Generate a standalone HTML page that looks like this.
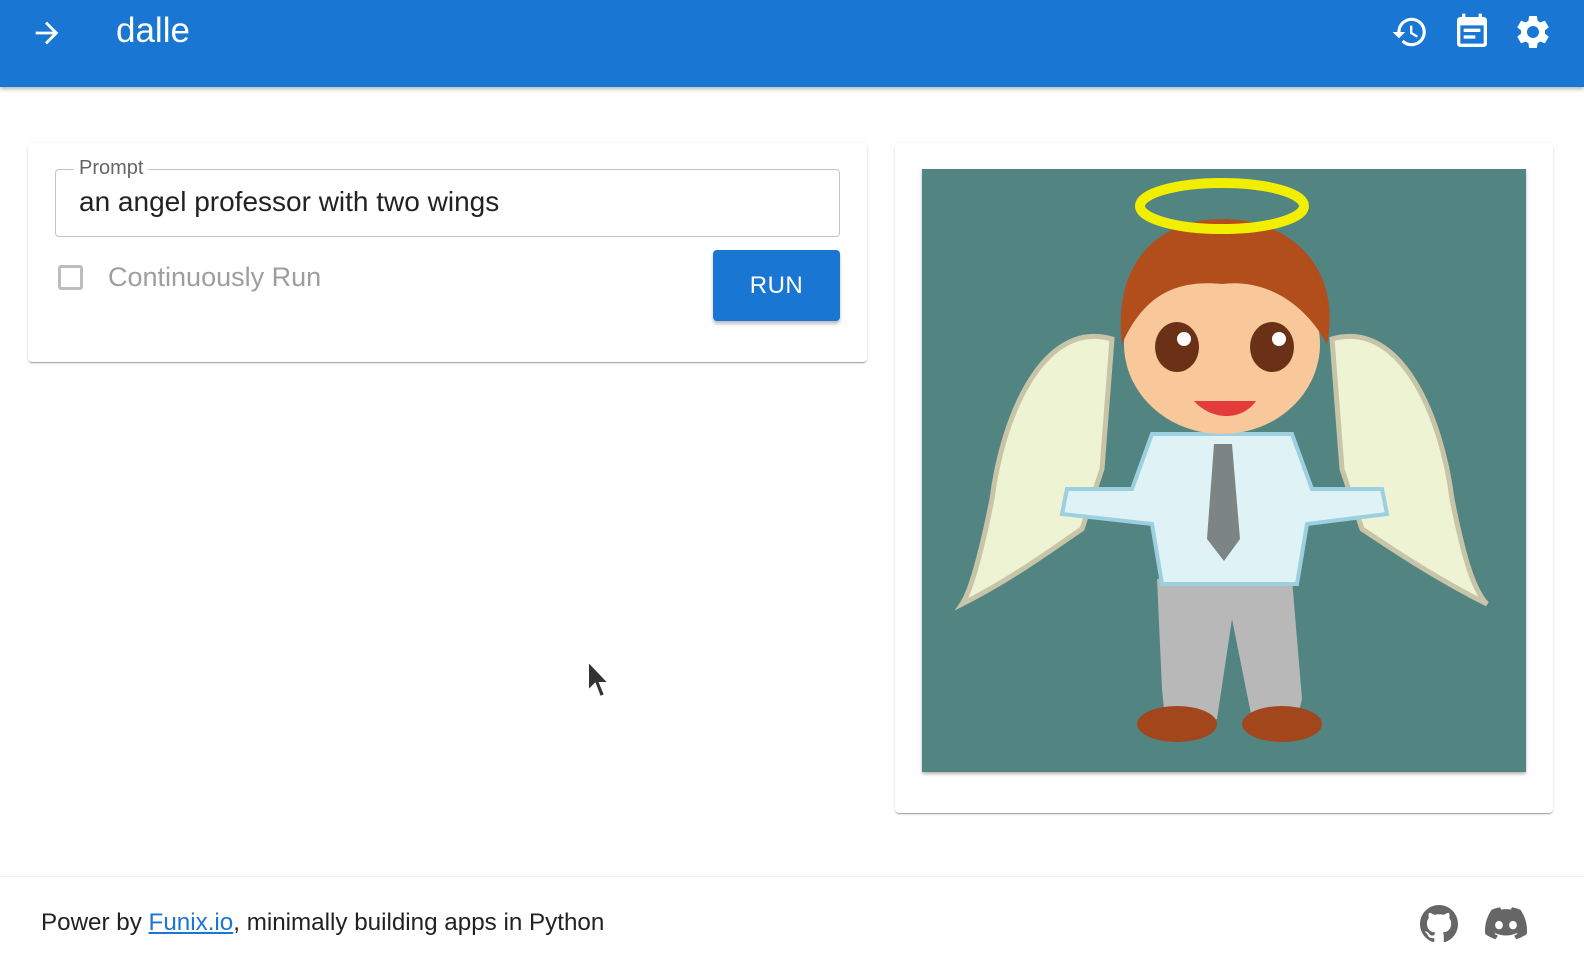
<!DOCTYPE html>
<html><head><meta charset="utf-8"><style>
body{margin:0;width:1584px;height:972px;background:#fff;font-family:"Liberation Sans",sans-serif;position:relative;overflow:hidden}
.hdr{position:absolute;left:0;top:0;width:1584px;height:87px;background:#1976d2;box-shadow:0 2px 4px rgba(0,0,0,.3)}
.card{position:absolute;background:#fff;border-radius:4px;box-shadow:0 2px 1px -1px rgba(0,0,0,.2),0 1px 1px rgba(0,0,0,.14),0 1px 3px rgba(0,0,0,.12)}
</style></head><body>
<div class="hdr">
<svg style="position:absolute;left:30px;top:16px" width="34" height="34" viewBox="0 0 24 24" fill="#fff"><path d="M12 4l-1.41 1.41L16.17 11H4v2h12.17l-5.58 5.59L12 20l8-8z"/></svg>
<div style="position:absolute;left:116px;top:11px;color:#fff;font-size:35px;font-weight:500">dalle</div>
<svg style="position:absolute;left:1391px;top:13px" width="38" height="38" viewBox="0 0 24 24" fill="#fff"><path d="M13 3a9 9 0 0 0-9 9H1l3.89 3.89.07.14L9 12H6c0-3.87 3.13-7 7-7s7 3.13 7 7-3.13 7-7 7c-1.93 0-3.68-.79-4.94-2.06l-1.42 1.42A8.954 8.954 0 0 0 13 21a9 9 0 0 0 0-18zm-1 5v5l4.28 2.54.72-1.21-3.5-2.08V8H12z"/></svg>
<svg style="position:absolute;left:1452px;top:12px" width="40" height="40" viewBox="0 0 24 24" fill="#fff"><path d="M17 10H7v2h10v-2zm2-7h-1V1h-2v2H8V1H6v2H5c-1.11 0-1.99.9-1.99 2L3 19a2 2 0 0 0 2 2h14c1.1 0 2-.9 2-2V5c0-1.1-.9-2-2-2zm0 16H5V8h14v11zm-5-5H7v2h7v-2z"/></svg>
<svg style="position:absolute;left:1513px;top:12px" width="40" height="40" viewBox="0 0 24 24" fill="#fff"><path d="M19.14 12.94c.04-.3.06-.61.06-.94 0-.32-.02-.64-.07-.94l2.03-1.58a.49.49 0 0 0 .12-.61l-1.92-3.32a.488.488 0 0 0-.59-.22l-2.39.96c-.5-.38-1.03-.7-1.62-.94l-.36-2.54a.484.484 0 0 0-.48-.41h-3.84c-.24 0-.43.17-.47.41l-.36 2.54c-.59.24-1.13.57-1.62.94l-2.39-.96c-.22-.08-.47 0-.59.22L2.74 8.87c-.12.21-.08.47.12.61l2.03 1.58c-.05.3-.09.63-.09.94s.02.64.07.94l-2.03 1.58a.49.49 0 0 0-.12.61l1.92 3.32c.12.22.37.29.59.22l2.39-.96c.5.38 1.03.7 1.62.94l.36 2.54c.05.24.24.41.48.41h3.84c.24 0 .44-.17.47-.41l.36-2.54c.59-.24 1.13-.56 1.62-.94l2.39.96c.22.08.47 0 .59-.22l1.92-3.32c.12-.22.07-.47-.12-.61l-2.01-1.58zM12 15.6c-1.98 0-3.6-1.62-3.6-3.6s1.62-3.6 3.6-3.6 3.6 1.62 3.6 3.6-1.62 3.6-3.6 3.6z"/></svg>
</div>

<div class="card" style="left:28px;top:143px;width:839px;height:219px">
<div style="position:absolute;left:27px;top:26px;width:783px;height:66px;border:1px solid #c4c4c4;border-radius:4px"></div>
<div style="position:absolute;left:46px;top:14px;background:#fff;padding:0 5px;color:#666;font-size:20px">Prompt</div>
<div style="position:absolute;left:51px;top:43px;color:#222;font-size:28px">an angel professor with two wings</div>
<div style="position:absolute;left:30px;top:122px;width:25px;height:25px;border:3px solid #bdbdbd;border-radius:3px;box-sizing:border-box"></div>
<div style="position:absolute;left:80px;top:119px;color:#9e9e9e;font-size:27px">Continuously Run</div>
<div style="position:absolute;left:685px;top:107px;width:127px;height:71px;background:#1976d2;border-radius:4px;box-shadow:0 3px 3px rgba(0,0,0,.25);color:#fff;font-size:24px;font-weight:500;text-align:center;line-height:71px;letter-spacing:.5px">RUN</div>
</div>

<div class="card" style="left:895px;top:143px;width:658px;height:670px">
<svg style="position:absolute;left:27px;top:26px;box-shadow:0 2px 3px rgba(0,0,0,.3)" width="604" height="603" viewBox="0 0 604 603">
<rect width="604" height="603" fill="#528482"/>
<path d="M190 170 C120 150 80 250 70 330 C60 380 50 420 40 435 C90 410 130 380 160 360 L180 300 Z" fill="#eef3d4" stroke="#c8c4a8" stroke-width="5"/>
<path d="M410 170 C480 150 520 250 530 330 C540 380 550 420 565 435 C515 410 470 380 440 360 L420 300 Z" fill="#eef3d4" stroke="#c8c4a8" stroke-width="5"/>
<path d="M245 570 L240 520 L235 410 L370 410 L380 530 L375 550 L330 550 L310 450 L295 550 Z" fill="#b8b8b8"/>
<ellipse cx="255" cy="555" rx="40" ry="18" fill="#a2461c"/>
<ellipse cx="360" cy="555" rx="40" ry="18" fill="#a2461c"/>
<path d="M230 265 L370 265 L390 320 L460 320 L465 345 L385 355 L375 415 L240 415 L230 355 L140 345 L145 320 L210 320 Z" fill="#dff2f5" stroke="#9ccfe0" stroke-width="4"/>
<path d="M292 275 L310 275 L318 370 L302 392 L285 370 Z" fill="#7d8484"/>
<ellipse cx="300" cy="175" rx="98" ry="90" fill="#f8c89a"/>
<path d="M200 175 C190 90 240 50 300 50 C370 50 420 100 405 175 C380 130 340 110 300 115 C250 110 220 130 200 175 Z" fill="#b24d1c"/>
<ellipse cx="255" cy="178" rx="22" ry="25" fill="#6b3116"/>
<ellipse cx="350" cy="178" rx="22" ry="25" fill="#6b3116"/>
<circle cx="262" cy="170" r="7" fill="#fff"/><circle cx="357" cy="170" r="7" fill="#fff"/>
<path d="M272 232 C290 252 320 252 334 232 Z" fill="#e33a3a"/>
<ellipse cx="300" cy="37" rx="82" ry="23" fill="none" stroke="#f2ee00" stroke-width="10"/>
</svg>
</div>

<svg style="position:absolute;left:586px;top:659px" width="26" height="44" viewBox="0 0 26 44"><path d="M2 2 L2 32 L9 25 L14 38 L19 36 L14 24 L23 24 Z" fill="#333" stroke="#fff" stroke-width="2"/></svg>

<div style="position:absolute;left:0;top:876px;width:1584px;border-top:1px solid #f0f0f0"></div>
<div style="position:absolute;left:41px;top:909px;font-size:24.2px;color:#222">Power by <span style="color:#1976d2;text-decoration:underline">Funix.io</span>, minimally building apps in Python</div>
<svg style="position:absolute;left:1420px;top:905px" width="38" height="38" viewBox="0 0 16 16" fill="#666"><path d="M8 0C3.58 0 0 3.58 0 8c0 3.54 2.29 6.53 5.47 7.59.4.07.55-.17.55-.38v-1.33c-2.23.48-2.7-1.07-2.7-1.07-.36-.92-.89-1.170-.89-1.17-.73-.5.06-.49.06-.49.8.06 1.23.83 1.23.83.71 1.22 1.87.87 2.33.66.07-.52.28-.87.51-1.07-1.78-.2-3.64-.89-3.64-3.95 0-.87.31-1.59.82-2.15-.08-.2-.36-1.02.08-2.12 0 0 .67-.21 2.2.82.64-.18 1.32-.27 2-.27.68 0 1.36.09 2 .27 1.53-1.04 2.2-.82 2.2-.82.44 1.1.16 1.92.08 2.12.51.56.82 1.27.82 2.15 0 3.07-1.87 3.75-3.65 3.95.29.25.54.73.54 1.48v2.2c0 .21.15.46.55.38A8.013 8.013 0 0 0 16 8c0-4.42-3.58-8-8-8z"/></svg>
<svg style="position:absolute;left:1485px;top:906px" width="42" height="34" viewBox="0 0 24 18" fill="#666"><path d="M20.3 1.5A19.8 19.8 0 0 0 15.4 0l-.6 1.3a18.4 18.4 0 0 0-5.6 0L8.6 0a19.7 19.7 0 0 0-4.9 1.5C.6 6.2-.3 10.8.1 15.3a19.9 19.9 0 0 0 6 3l1.3-2.1c-.7-.3-1.4-.6-2-1l.5-.4a14.2 14.2 0 0 0 12.2 0l.5.4c-.6.4-1.3.7-2 1l1.3 2.1a19.8 19.8 0 0 0 6-3c.5-5.2-.9-9.8-3.6-13.8zM8 12.6c-1.2 0-2.2-1.1-2.2-2.4s1-2.4 2.2-2.4 2.2 1.1 2.2 2.4-1 2.4-2.2 2.4zm8 0c-1.2 0-2.2-1.1-2.2-2.4s1-2.4 2.2-2.4 2.2 1.1 2.2 2.4-1 2.4-2.2 2.4z"/></svg>
</body></html>
